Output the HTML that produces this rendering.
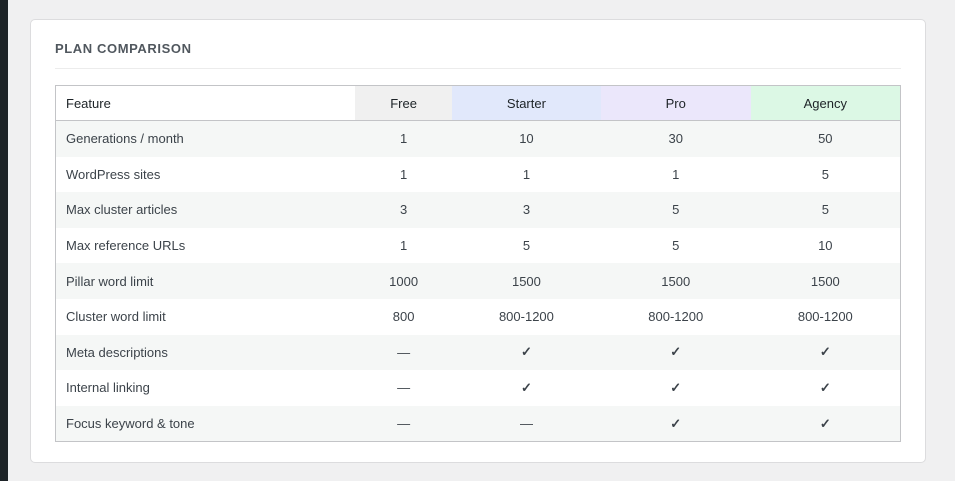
<!DOCTYPE html>
<html><head><style>
html,body{margin:0;padding:0;width:955px;height:481px;background:#f0f0f1;font-family:"Liberation Sans",sans-serif;overflow:hidden;position:relative}
.side{position:absolute;left:0;top:0;width:8px;height:481px;background:#1d2327}
.card{position:absolute;left:30px;top:19px;width:896px;height:444px;background:#fff;border:1px solid #dcdcde;border-radius:5px;box-sizing:border-box}
h2{position:absolute;left:24px;top:21px;margin:0;font-size:13px;font-weight:bold;letter-spacing:0.6px;color:#50575e}
.hr{position:absolute;left:24px;top:48px;width:846px;height:1px;background:#ececec}
table{position:absolute;left:24px;top:65px;width:846px;border-collapse:collapse;border:1px solid #c3c4c7;font-size:13px;color:#3c434a}
td,th{padding:0;text-align:center;font-weight:normal;height:35.6px}
th{height:34px;border-bottom:1px solid #c3c4c7;color:#1d2327}
td:first-child,th:first-child{text-align:left;padding-left:10px}
tr:nth-child(even) td{background:#f5f7f6}
.c{font-weight:bold}
</style></head><body>
<div class="side"></div>
<div class="card">
<h2>PLAN COMPARISON</h2>
<div class="hr"></div>
<table>
<colgroup><col style="width:300px"><col style="width:97px"><col style="width:149px"><col style="width:150px"><col style="width:150px"></colgroup>
<tr><th>Feature</th><th style="background:#f0f0f0">Free</th><th style="background:#e1e8fb">Starter</th><th style="background:#ebe7fb">Pro</th><th style="background:#dcf8e5">Agency</th></tr>
<tr><td>Generations / month</td><td>1</td><td>10</td><td>30</td><td>50</td></tr>
<tr><td>WordPress sites</td><td>1</td><td>1</td><td>1</td><td>5</td></tr>
<tr><td>Max cluster articles</td><td>3</td><td>3</td><td>5</td><td>5</td></tr>
<tr><td>Max reference URLs</td><td>1</td><td>5</td><td>5</td><td>10</td></tr>
<tr><td>Pillar word limit</td><td>1000</td><td>1500</td><td>1500</td><td>1500</td></tr>
<tr><td>Cluster word limit</td><td>800</td><td>800-1200</td><td>800-1200</td><td>800-1200</td></tr>
<tr><td>Meta descriptions</td><td>—</td><td class="c">✓</td><td class="c">✓</td><td class="c">✓</td></tr>
<tr><td>Internal linking</td><td>—</td><td class="c">✓</td><td class="c">✓</td><td class="c">✓</td></tr>
<tr><td>Focus keyword &amp; tone</td><td>—</td><td>—</td><td class="c">✓</td><td class="c">✓</td></tr>
</table>
</div>
</body></html>
